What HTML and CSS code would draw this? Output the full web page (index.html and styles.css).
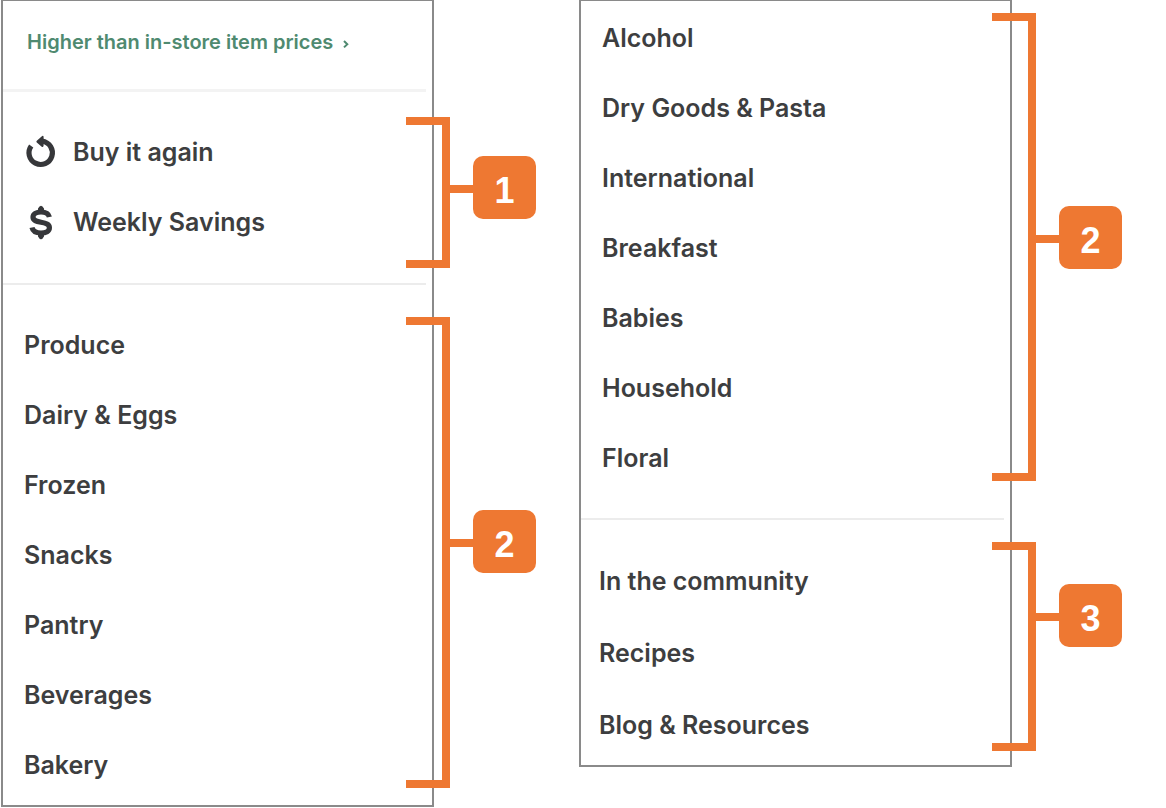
FILE: index.html
```html
<!DOCTYPE html>
<html lang="en">
<head>
    <meta charset="UTF-8">
    <meta name="viewport" content="width=device-width, initial-scale=1.0">
    <title>Store navigation</title>
    <link rel="stylesheet" href="styles.css">
</head>
<body>
    <main class="page">
        <nav class="panel" aria-label="Store menu">
            <div class="notice">
                <a href="#">Higher than in-store item prices
                    <svg class="chevron" viewBox="0 0 6 10" aria-hidden="true"><path d="M1 2 4.3 5.2 1 8.4"/></svg>
                </a>
            </div>
            <hr class="thick">
            <section class="group shortcuts">
                <ul>
                    <li><a href="#">
                        <svg class="icon" viewBox="0 0 32 32" aria-hidden="true">
                            <path class="line" d="M7.2 9.9A11.7 11.7 0 1 0 18.5 5.2"/>
                            <path d="M12.8 4.8 17.6.4Q19.6-1 19.6 1.2V2.8L23 4.4 21.5 8 19.6 7.8V9.6Q19.4 12 17.4 10.4L12.8 6.6Q11.8 5.7 12.8 4.8Z"/>
                        </svg>
                        Buy it again</a></li>
                    <li><a href="#">
                        <svg class="icon" viewBox="0 0 32 32" aria-hidden="true">
                            <path class="line" d="M25.4 11C24.6 7.6 21.5 6 17 6C12.2 6 9 8 9 11.1C9 14.7 12.2 15.4 17 16.3C22 17.2 25.4 18.2 25.4 21.7C25.4 25.2 22 27 17 27C12 27 8.8 25.1 8 21.5"/>
                            <path d="M14 5.5V2.6Q17-3 20 2.6V5.5ZM14 28V30.4Q17 36 20 30.4V28Z"/>
                        </svg>
                        Weekly Savings</a></li>
                </ul>
                <div class="bracket bracket-shortcuts"><span class="badge">1</span></div>
            </section>
            <hr>
            <section class="group departments">
                <ul>
                    <li><a href="#">Produce</a></li>
                    <li><a href="#">Dairy &amp; Eggs</a></li>
                    <li><a href="#">Frozen</a></li>
                    <li><a href="#">Snacks</a></li>
                    <li><a href="#">Pantry</a></li>
                    <li><a href="#">Beverages</a></li>
                    <li><a href="#">Bakery</a></li>
                </ul>
                <div class="bracket bracket-departments"><span class="badge">2</span></div>
            </section>
        </nav>

        <nav class="panel panel-right" aria-label="Store menu, continued">
            <section class="group more-departments">
                <ul>
                    <li><a href="#">Alcohol</a></li>
                    <li><a href="#">Dry Goods &amp; Pasta</a></li>
                    <li><a href="#">International</a></li>
                    <li><a href="#">Breakfast</a></li>
                    <li><a href="#">Babies</a></li>
                    <li><a href="#">Household</a></li>
                    <li><a href="#">Floral</a></li>
                </ul>
                <div class="bracket bracket-more"><span class="badge">2</span></div>
            </section>
            <hr>
            <section class="group community">
                <ul>
                    <li><a href="#">In the community</a></li>
                    <li><a href="#">Recipes</a></li>
                    <li><a href="#">Blog &amp; Resources</a></li>
                </ul>
                <div class="bracket bracket-community"><span class="badge">3</span></div>
            </section>
        </nav>
    </main>
</body>
</html>
```
FILE: styles.css
```css
* {
    box-sizing: border-box;
}
body {
    margin: 0;
    background: #fff;
    color: #3d3e40;
    font-family: Inter, "Liberation Sans", sans-serif;
}
.page {
    display: grid;
    grid-template-columns: 1fr 1fr;
    gap: 145px;
    align-items: start;
    padding: 0 154px 0 1px;
}
.panel {
    border: 2px solid #8a8a8a;
    border-top-width: 1px;
}
a {
    color: inherit;
    text-decoration: none;
}
a:hover {
    text-decoration: underline;
}
hr {
    height: 2px;
    margin: 0 6px 0 0;
    border: none;
    background: #ececec;
}
hr.thick {
    height: 3px;
    background: #f3f3f3;
}

.notice {
    padding: 29px 24px 35px;
    color: #4f8a70;
    font-size: 20px;
    font-weight: 600;
    line-height: 24px;
}
.chevron {
    width: 6px;
    height: 10px;
    margin-left: 5px;
    fill: none;
    stroke: currentColor;
    stroke-width: 2;
}

.group {
    position: relative;
    padding: 25px 21px;
}
.group ul {
    margin: 0;
    padding: 0;
    list-style: none;
}
.group li {
    display: flex;
    align-items: center;
    height: 70px;
    font-size: 25px;
    font-weight: 600;
    line-height: 30px;
}
.group li a {
    display: flex;
    align-items: center;
    gap: 17px;
}
.shortcuts {
    padding-bottom: 26px;
}
.departments {
    padding-bottom: 5px;
}
.more-departments {
    padding-top: 2px;
    padding-bottom: 25px;
}
.community {
    padding: 25px 18px 4px;
}
.community li {
    height: 72px;
}
.icon {
    width: 32px;
    height: 32px;
    overflow: visible;
    fill: #36373a;
}
.icon .line {
    fill: none;
    stroke: #36373a;
    stroke-width: 5.2;
}

/* callout brackets over the panel's right border */
.bracket {
    position: absolute;
    right: -18px;
    width: 44px;
    border: 8px solid #ee7832;
    border-left: none;
}
.panel-right .bracket {
    right: -26px;
}
.badge {
    position: absolute;
    left: calc(100% + 31px);
    display: flex;
    justify-content: center;
    align-items: center;
    width: 63px;
    height: 63px;
    padding-top: 7px;
    border-radius: 10px;
    background: #ee7832;
    color: #fff;
    font-family: "Liberation Sans", Arial, sans-serif;
    font-size: 36px;
    font-weight: bold;
}
.badge::before {
    content: "";
    position: absolute;
    top: 29px;
    right: 100%;
    width: 24px;
    height: 8px;
    background: #ee7832;
}
.bracket-shortcuts {
    top: 25px;
    bottom: 15px;
}
.bracket-shortcuts .badge {
    top: 31px;
}
.bracket-departments {
    top: 32px;
    bottom: 17px;
}
.bracket-departments .badge {
    top: 185px;
}
.bracket-more {
    top: 12px;
    bottom: 37px;
}
.bracket-more .badge {
    top: 185px;
}
.bracket-community {
    top: 22px;
    bottom: 14px;
}
.bracket-community .badge {
    top: 34px;
}
```
